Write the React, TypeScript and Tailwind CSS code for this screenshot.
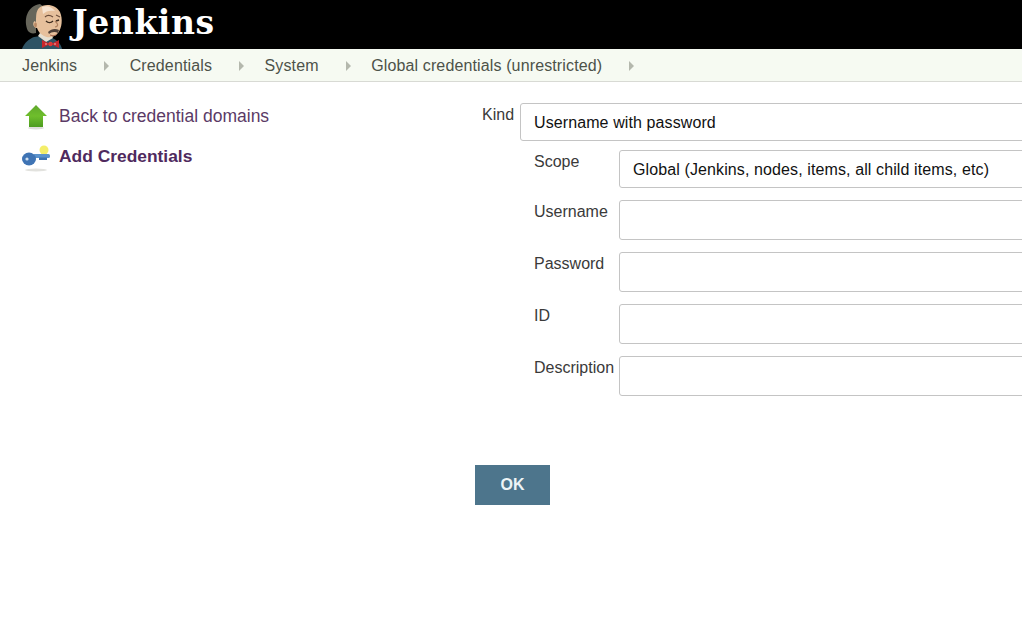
const crumbs = ['Jenkins', 'Credentials', 'System', 'Global credentials (unrestricted)'];

function Mascot() {
  return (
    <svg width="44" height="49" viewBox="0 0 44 49" className="shrink-0">
      {/* jacket */}
      <path d="M1 49 C3 43 8 39 13 37 L20 36 L31 38 C36 40 40 44 41 49 Z" fill="#2f5364" />
      <path d="M17 36 L25 42 L32 38 L30 34 L19 33 Z" fill="#e6e0d2" />
      {/* hair */}
      <path d="M7 31 C2 20 6 6 19 4 L23 7 C17 10 15 16 15 22 L15 33 C11 34 9 33 7 31 Z" fill="#67665b" />
      {/* head */}
      <path d="M18 8 C23 3 35 4 39 12 C42 19 41 28 37 33 C33 38 27 38 23 36 C19 34 17 31 16 28 C12 28 11 22 14 21 L15 23 C15 16 15 11 18 8 Z" fill="#e6c09c" />
      <path d="M21 7 C26 5 31 7 34 11 C29 10 25 11 22 14 Z" fill="#f5e2cf" />
      <ellipse cx="14.5" cy="25" rx="1.4" ry="2.4" fill="#b88763" />
      {/* brow, eye */}
      <path d="M24 17 C26 15 29 15 32 17" stroke="#6a4c3a" strokeWidth="1.2" fill="none" />
      <path d="M35 15 L39 17" stroke="#6a4c3a" strokeWidth="1.2" fill="none" />
      <path d="M25 21 C27 23 30 23 32 21" stroke="#3a2a1e" strokeWidth="1.4" fill="none" />
      <path d="M35 21 L38 20" stroke="#3a2a1e" strokeWidth="1.4" fill="none" />
      {/* nose and moustache */}
      <path d="M34 21 C37 24 38 26 34 27" stroke="#b08260" strokeWidth="1.2" fill="none" />
      <path d="M27 32 C30 29 34 28 38 30 L37 33 C34 31 30 32 28 34 Z" fill="#4f4038" />
      <path d="M29 35 C32 36 34 36 36 34" stroke="#a5694f" strokeWidth="1" fill="none" />
      {/* bow tie */}
      <path d="M29 44 L21 40 L21 48 Z" fill="#c8262c" />
      <path d="M30 44 L38 40 L38 48 Z" fill="#c8262c" />
      <circle cx="29.5" cy="44" r="2.2" fill="#e03a38" />
      <circle cx="25" cy="44" r="0.8" fill="#f4d0c8" />
      <circle cx="34" cy="44" r="0.8" fill="#f4d0c8" />
    </svg>
  );
}

function UpArrow() {
  return (
    <svg width="26" height="26" viewBox="0 0 26 26">
      <defs>
        <linearGradient id="arrowFill" x1="0" y1="0" x2="0" y2="1">
          <stop offset="0" stopColor="#5fa82c" />
          <stop offset="0.5" stopColor="#6fbe2c" />
          <stop offset="1" stopColor="#4d9c20" />
        </linearGradient>
      </defs>
      <ellipse cx="13" cy="24" rx="8" ry="1.5" fill="#dededa" />
      <path d="M13 1 L24 12 L20 12 L20 23 L6 23 L6 12 L2 12 Z" fill="url(#arrowFill)" />
    </svg>
  );
}

function KeyIcon() {
  return (
    <svg width="30" height="30" viewBox="0 0 30 30">
      <ellipse cx="14" cy="28" rx="11" ry="1.5" fill="#e2e2de" />
      <circle cx="22" cy="8" r="4.5" fill="#f4ee6a" />
      <rect x="11" y="12" width="17" height="4" rx="1.5" fill="#5b93cc" />
      <rect x="17" y="15.5" width="8" height="2.5" fill="#3f74b0" />
      <ellipse cx="7" cy="17" rx="7" ry="6.5" fill="#3f74b4" />
      <circle cx="5" cy="17" r="1.6" fill="#cfe0f0" />
    </svg>
  );
}

function Caret() {
  return <span className="block h-0 w-0 border-y-[5px] border-l-[5px] border-y-transparent border-l-[#b4b8ad]" />;
}

function Field({ label, value, tall }: { label: string; value?: string; tall?: boolean }) {
  return (
    <div className="flex">
      <div className="w-[86px] shrink-0 pl-[1px] text-[#3a3a3a]">{label}</div>
      <div
        className={`flex w-[600px] shrink-0 items-center rounded-[3px] border border-[#c4c4c4] pt-[2px] pl-[13px] tracking-[0.11px] text-[#111] ${tall ? 'h-[40px]' : 'h-[38px]'}`}
      >
        {value}
      </div>
    </div>
  );
}

export default function App() {
  return (
    <div className="h-[626px] w-[1022px] overflow-hidden bg-white font-['Liberation_Sans',Arial,sans-serif] text-base">
      <header className="flex h-[49px] items-start overflow-hidden bg-black pl-[21px]">
        <Mascot />
        <span className="ml-[5px] pl-[2px] font-['DejaVu_Serif',serif] text-[33px] leading-[45px] font-bold tracking-[0.6px] text-white">
          Jenkins
        </span>
      </header>
      <nav className="flex h-[33px] items-center border-b border-[#d8dad4] bg-[#f6faf2] pt-[1px] pl-[22px] tracking-[0.13px] text-[#4d5249]">
        {crumbs.map((crumb) => (
          <div key={crumb} className="flex items-center">
            <span>{crumb}</span>
            <span className="mr-[20.5px] ml-[27px]">
              <Caret />
            </span>
          </div>
        ))}
      </nav>
      <div className="flex">
        <aside className="w-[482px] shrink-0 pt-[21px] pl-[22px] text-[17.5px] text-[#5c3566]">
          <div className="flex h-[27px] items-center gap-[10px]">
            <span className="ml-[1px] w-[26px]">
              <UpArrow />
            </span>
            <span className="text-[#5b3a66]">Back to credential domains</span>
          </div>
          <div className="mt-[13px] flex h-[27px] items-center gap-[7px]">
            <KeyIcon />
            <span className="text-[17.4px] font-bold text-[#4f2a5e]">Add Credentials</span>
          </div>
        </aside>
        <main className="pt-[21px]">
          <div className="flex">
            <div className="w-[38px] shrink-0 text-[#3a3a3a]">Kind</div>
            <div className="flex h-[38px] w-[600px] shrink-0 items-center rounded-[3px] border border-[#c4c4c4] pt-[2px] pl-[13px] tracking-[0.1px] text-[#111]">
              Username with password
            </div>
          </div>
          <div className="mt-[9px] ml-[51px] flex flex-col gap-[12px]">
            <Field label="Scope" value="Global (Jenkins, nodes, items, all child items, etc)" />
            <Field label="Username" tall />
            <Field label="Password" tall />
            <Field label="ID" tall />
            <Field label="Description" tall />
          </div>
          <button className="mt-[69px] ml-[-7px] h-[40px] w-[75px] bg-[#4d758c] font-bold text-[#eef4f6]">OK</button>
        </main>
      </div>
    </div>
  );
}
